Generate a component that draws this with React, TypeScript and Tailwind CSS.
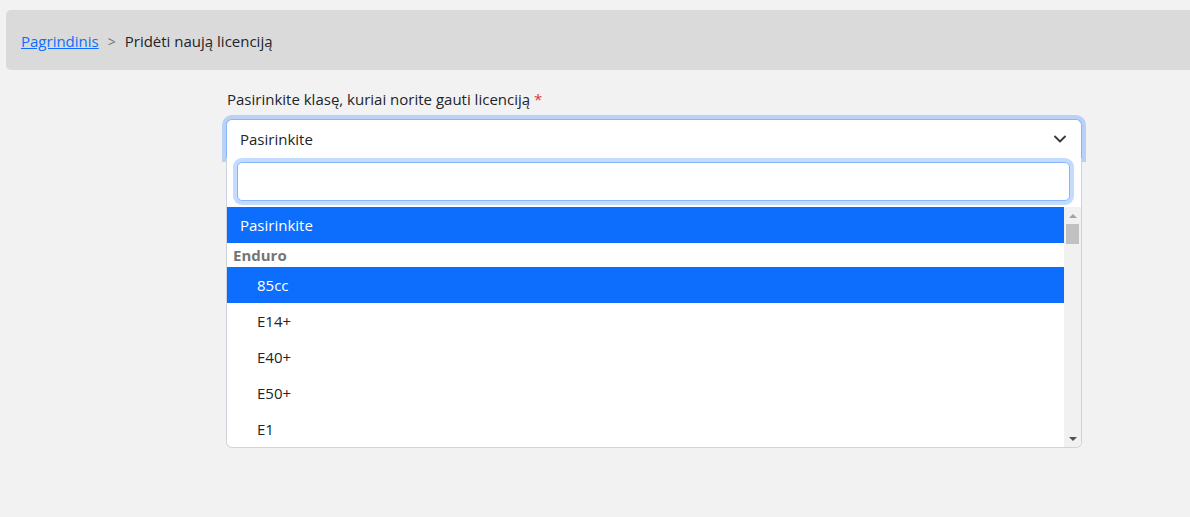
const options = ["85cc", "E14+", "E40+", "E50+", "E1"];

export default function App() {
  return (
    <div
      className="min-h-[517px] bg-[#f2f2f2] text-[#212529] text-[15px] pt-[10px]"
      style={{ fontFamily: '"Open Sans", "Noto Sans", sans-serif' }}
    >
      {/* Breadcrumb */}
      <div className="ml-[6px] h-[60px] bg-[#dadada] rounded-l-[5px] flex items-center px-[15px] pt-[3px]">
        <a href="#" className="text-[#0d6efd] underline">
          Pagrindinis
        </a>
        <span className="text-[#6c757d] px-[9px] text-[14px]">&gt;</span>
        <span>Pridėti naują licenciją</span>
      </div>

      {/* Form */}
      <div className="ml-[226px] w-[856px] mt-[17px]">
        <label className="block leading-6 mb-[8px] pl-px">
          Pasirinkite klasę, kuriai norite gauti licenciją{" "}
          <span className="text-[#dc3545]">*</span>
        </label>

        <div className="relative">
          <div className="h-[39px] bg-white border border-b-0 border-[#86b7fe] rounded-t-[6px] ring-4 ring-[#0d6efd]/25 flex items-center justify-between pl-[13px] pr-[15px]">
            <span>Pasirinkite</span>
            <svg width="12" height="8" viewBox="0 0 12 8" className="text-[#343a40]">
              <polyline points="1,1.5 6,6.5 11,1.5" fill="none" stroke="currentColor" strokeWidth="1.8" strokeLinecap="round" strokeLinejoin="round" />
            </svg>
          </div>

          <div className="relative bg-white border border-t-0 border-[#ced4da] rounded-b-[6px] overflow-hidden">
            <div className="pt-[4px] pb-[6px] pl-[10px] pr-[11px]">
              <div className="h-[39px] border border-[#86b7fe] rounded-[5px] ring-4 ring-[#0d6efd]/25 bg-white" />
            </div>

            <div className="flex h-[240px]">
              <div className="flex-1 flex flex-col">
                <div className="h-[36px] bg-[#0d6efd] text-white flex items-center px-[13px]">
                  Pasirinkite
                </div>
                <div className="h-[24px] flex items-center px-[6px] font-bold text-[#757575]">
                  Enduro
                </div>
                {options.map((o, i) => (
                  <div
                    key={o}
                    className={
                      i === 0
                        ? "h-[36px] shrink-0 flex items-center pl-[30px] bg-[#0d6efd] text-white"
                        : "h-[36px] shrink-0 flex items-center pl-[30px]"
                    }
                  >
                    {o}
                  </div>
                ))}
              </div>

              {/* scrollbar */}
              <div className="w-[17px] bg-[#f1f1f1] flex flex-col items-center">
                <div className="h-[17px] flex items-center justify-center">
                  <div className="w-0 h-0 border-l-[4px] border-r-[4px] border-b-[4px] border-l-transparent border-r-transparent border-b-[#a3a3a3]" />
                </div>
                <div className="w-[13px] h-[20px] bg-[#c1c1c1]" />
                <div className="flex-1" />
                <div className="h-[17px] flex items-center justify-center">
                  <div className="w-0 h-0 border-l-[4px] border-r-[4px] border-t-[4px] border-l-transparent border-r-transparent border-t-[#505050]" />
                </div>
              </div>
            </div>
          </div>
        </div>
      </div>
    </div>
  );
}
